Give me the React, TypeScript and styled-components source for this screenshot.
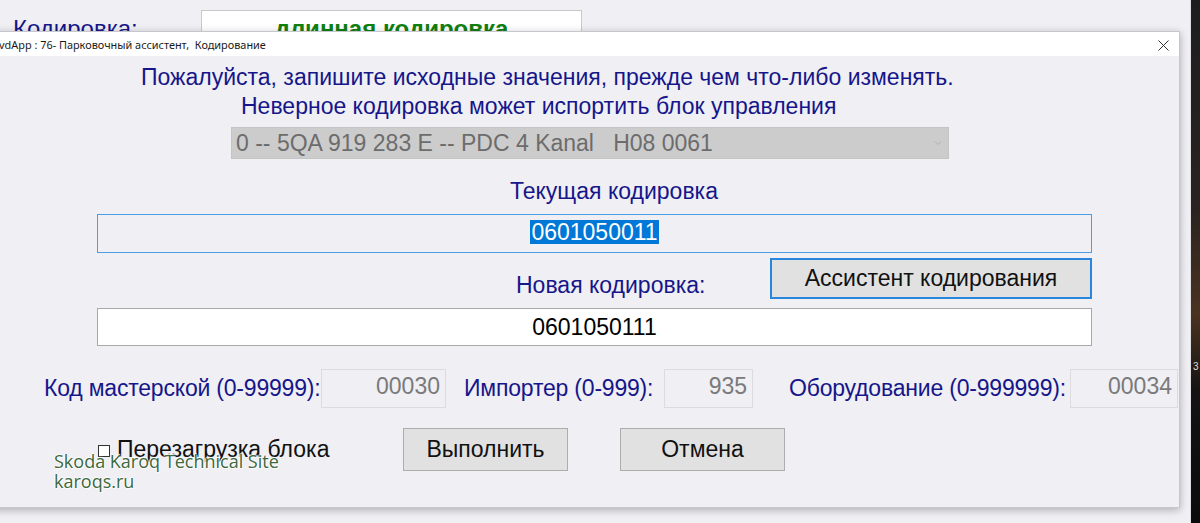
import React from "react";
import styled, { createGlobalStyle } from "styled-components";

const Global = createGlobalStyle`
  html, body { margin: 0; padding: 0; }
  body { width: 1200px; height: 523px; overflow: hidden; background: #efeff4; }
`;

const Desktop = styled.div`
  position: relative;
  width: 1200px;
  height: 523px;
  overflow: hidden;
  background: linear-gradient(180deg, #1d1d1f 0%, #2a2320 40%, #4a3320 60%, #141212 75%, #0b0b0b 100%);
  font-family: "Liberation Sans", Arial, sans-serif;
`;

const BackWindow = styled.div`
  position: absolute;
  left: 0;
  top: 0;
  width: 1191px;
  height: 523px;
  background: #efeff4;
  border-right: 1px solid #dcdce2;
  display: flex;
  align-items: flex-start;
  padding: 10px 0 0 13px;
  box-sizing: border-box;
  gap: 56px;
`;

const BackLabel = styled.div`
  color: #16168a;
  font-size: 24px;
  line-height: 28px;
  padding-top: 5px;
  width: 132px;
`;

const BackValue = styled.div`
  width: 379px;
  height: 30px;
  background: #ffffff;
  border: 1px solid #c8c8c8;
  color: #108010;
  font-weight: bold;
  font-size: 24px;
  text-align: center;
  line-height: 36px;
`;

const Dialog = styled.div`
  position: absolute;
  left: -10px;
  top: 31px;
  width: 1190px;
  height: 477px;
  background: #efeff4;
  box-shadow: 0 2px 8px rgba(0, 0, 0, 0.28);
  border: 1px solid #c6c6cc;
  box-sizing: border-box;
  display: flex;
  flex-direction: column;
`;

const TitleBar = styled.div`
  height: 24px;
  flex: none;
  background: #ffffff;
  display: flex;
  align-items: center;
  justify-content: space-between;
  padding: 0 10px 0 8px;
  font-family: "Noto Sans", "Open Sans", sans-serif;
  font-size: 10.9px;
  color: #1a1a1a;
`;

const Close = styled.span`
  width: 12px;
  height: 12px;
  display: flex;
  align-items: center;
  justify-content: center;
  margin-top: 2px;
`;

const Body = styled.div`
  flex: 1;
  display: flex;
  flex-direction: column;
  padding: 7px 0 0 106px;
`;

const Line = styled.div<{ $indent: number; $top?: number; $h?: number }>`
  margin-left: ${(p) => p.$indent}px;
  margin-top: ${(p) => p.$top ?? 0}px;
  color: #16168a;
  font-size: 23px;
  line-height: ${(p) => p.$h ?? 29}px;
  white-space: nowrap;
  flex: none;
`;

const Select = styled.div`
  margin-left: 134px;
  margin-top: 6px;
  width: 718px;
  height: 32px;
  background: #cccccc;
  border: 1px solid #c4c4c4;
  box-sizing: border-box;
  display: flex;
  align-items: center;
  justify-content: space-between;
  padding: 0 6px 0 4px;
  color: #6c6c6c;
  font-size: 23px;
  white-space: pre;
`;

const Field = styled.div<{ $focused?: boolean; $top: number }>`
  width: 995px;
  margin-top: ${(p) => p.$top}px;
  height: ${(p) => (p.$focused ? 39 : 38)}px;
  box-sizing: border-box;
  border: 1px solid ${(p) => (p.$focused ? "#4a9ee6" : "#a8a8a8")};
  background: ${(p) => (p.$focused ? "#efeff4" : "#ffffff")};
  display: flex;
  align-items: ${(p) => (p.$focused ? "flex-start" : "center")};
  padding-top: ${(p) => (p.$focused ? 5 : 0)}px;
  justify-content: center;
  font-size: 23px;
  color: #000;
`;

const Selected = styled.span`
  background: #0078d7;
  color: #ffffff;
  padding: 0 1px;
  line-height: 24px;
`;

const MidRow = styled.div`
  display: flex;
  align-items: flex-start;
  height: 50px;
  margin-top: 5px;
`;

const Button = styled.div<{ $w: number; $h: number; $primary?: boolean; $gap?: number }>`
  width: ${(p) => p.$w}px;
  height: ${(p) => p.$h}px;
  margin-left: ${(p) => p.$gap ?? 0}px;
  box-sizing: border-box;
  background: #e1e1e1;
  border: ${(p) => (p.$primary ? "2px solid #2a86dc" : "1px solid #adadad")};
  display: flex;
  align-items: center;
  justify-content: center;
  font-size: 23px;
  color: #111;
  flex: none;
`;

const NumRow = styled.div`
  display: flex;
  align-items: flex-start;
  margin-left: -53px;
  margin-top: 23px;
  height: 39px;
`;

const NumLabel = styled.div<{ $w: number }>`
  min-width: ${(p) => p.$w}px;
  color: #16168a;
  font-size: 23px;
  letter-spacing: -0.2px;
  line-height: 24px;
  padding-top: 7px;
  white-space: nowrap;
  flex: none;
`;

const NumBox = styled.div<{ $w: number; $after: number }>`
  width: ${(p) => p.$w}px;
  height: 39px;
  box-sizing: border-box;
  border: 1px solid #dcdce0;
  background: #efeff4;
  color: #7a7a7a;
  font-size: 23px;
  line-height: 26px;
  text-align: right;
  padding: 3px 5px 0 0;
  margin-right: ${(p) => p.$after}px;
  flex: none;
`;

const BottomRow = styled.div`
  position: relative;
  display: flex;
  align-items: center;
  margin-top: 20px;
`;

const CheckWrap = styled.div`
  display: flex;
  align-items: center;
  width: 306px;
  font-size: 23px;
  color: #111;
  flex: none;
`;

const Box = styled.span`
  width: 10px;
  height: 10px;
  border: 1px solid #333;
  background: #fff;
  margin: 3px 7px 0 1px;
  flex: none;
`;

const Watermark = styled.div`
  position: absolute;
  left: -43px;
  top: 23px;
  font-family: "Open Sans", "Noto Sans", sans-serif;
  font-size: 18px;
  line-height: 20px;
  color: #3d683d;
  text-shadow: 1px 1px 1px #ffffff, -1px 0 1px #ffffff, 0 -1px 1px #ffffff;
  pointer-events: none;
`;

const Tiny = styled.span`
  position: absolute;
  left: 1193px;
  top: 361px;
  font-size: 10px;
  color: #ddd;
`;

export default function App() {
  return (
    <>
      <Global />
      <Desktop>
        <BackWindow>
          <BackLabel>Кодировка:</BackLabel>
          <BackValue>длинная кодировка</BackValue>
        </BackWindow>
        <Tiny>3</Tiny>
        <Dialog>
          <TitleBar>
            <span>vdApp : 76- Парковочный ассистент,&nbsp; Кодирование</span>
            <Close>
              <svg width="11" height="11" viewBox="0 0 11 11">
                <path d="M0.5 0.5 L10.5 10.5 M10.5 0.5 L0.5 10.5" stroke="#333" strokeWidth="1" fill="none" />
              </svg>
            </Close>
          </TitleBar>
          <Body>
            <Line $indent={44}>Пожалуйста, запишите исходные значения, прежде чем что-либо изменять.</Line>
            <Line $indent={144}>Неверное кодировка может испортить блок управления</Line>
            <Select>
              <span>0 -- 5QA 919 283 E -- PDC 4 Kanal   H08 0061</span>
              <svg width="8" height="6" viewBox="0 0 8 6">
                <path d="M1 1.5 L4 4.5 L7 1.5" stroke="#b0b0b0" strokeWidth="1" fill="none" />
              </svg>
            </Select>
            <Line $indent={413} $top={20} $h={24}>Текущая кодировка</Line>
            <Field $focused $top={11}>
              <Selected>0601050011</Selected>
            </Field>
            <MidRow>
              <Line $indent={419} $top={15} $h={24} style={{ width: 254 }}>Новая кодировка:</Line>
              <Button $w={322} $h={41} $primary>Ассистент кодирования</Button>
            </MidRow>
            <Field $top={0}>0601050111</Field>
            <NumRow>
              <NumLabel $w={277}>Код мастерской (0-99999):</NumLabel>
              <NumBox $w={125} $after={18}>00030</NumBox>
              <NumLabel $w={200}>Импортер (0-999):</NumLabel>
              <NumBox $w={89} $after={36}>935</NumBox>
              <NumLabel $w={281}>Оборудование (0-999999):</NumLabel>
              <NumBox $w={108} $after={0}>00034</NumBox>
            </NumRow>
            <BottomRow>
              <CheckWrap>
                <Box />
                Перезагрузка блока
              </CheckWrap>
              <Button $w={165} $h={43}>Выполнить</Button>
              <Button $w={165} $h={43} $gap={52}>Отмена</Button>
              <Watermark>
                Skoda Karoq Technical Site
                <br />
                karoqs.ru
              </Watermark>
            </BottomRow>
          </Body>
        </Dialog>
      </Desktop>
    </>
  );
}
